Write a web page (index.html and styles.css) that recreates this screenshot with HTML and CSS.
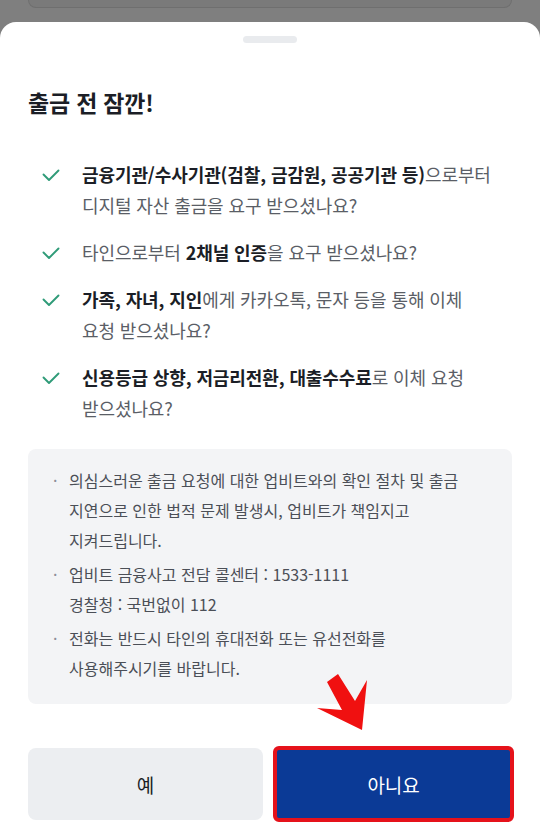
FILE: index.html
```html
<!DOCTYPE html>
<html lang="ko">
<head>
<meta charset="utf-8">
<title>출금 전 잠깐!</title>
<link rel="stylesheet" href="styles.css">
</head>
<body>
  <div class="dim-page">
    <div class="dim-card"></div>
  </div>

  <section class="sheet">
    <div class="handle"></div>
    <h1 class="title">출금 전 잠깐!</h1>

    <ul class="checks">
      <li class="check-item">
        <svg class="check-icon" viewBox="0 0 18 13"><path d="M1.5 5.5 L7 11 L16.5 1.5"/></svg>
        <p><b>금융기관/수사기관(검찰, 금감원, 공공기관 등)</b>으로부터<br>디지털 자산 출금을 요구 받으셨나요?</p>
      </li>
      <li class="check-item">
        <svg class="check-icon" viewBox="0 0 18 13"><path d="M1.5 5.5 L7 11 L16.5 1.5"/></svg>
        <p>타인으로부터 <b>2채널 인증</b>을 요구 받으셨나요?</p>
      </li>
      <li class="check-item">
        <svg class="check-icon" viewBox="0 0 18 13"><path d="M1.5 5.5 L7 11 L16.5 1.5"/></svg>
        <p><b>가족, 자녀, 지인</b>에게 카카오톡, 문자 등을 통해 이체<br>요청 받으셨나요?</p>
      </li>
      <li class="check-item">
        <svg class="check-icon" viewBox="0 0 18 13"><path d="M1.5 5.5 L7 11 L16.5 1.5"/></svg>
        <p><b>신용등급 상향, 저금리전환, 대출수수료</b>로 이체 요청<br>받으셨나요?</p>
      </li>
    </ul>

    <div class="notice">
      <ul class="notice-list">
        <li>의심스러운 출금 요청에 대한 업비트와의 확인 절차 및 출금<br>지연으로 인한 법적 문제 발생시, 업비트가 책임지고<br>지켜드립니다.</li>
        <li>업비트 금융사고 전담 콜센터 : 1533-1111<br>경찰청 : 국번없이 112</li>
        <li>전화는 반드시 타인의 휴대전화 또는 유선전화를<br>사용해주시기를 바랍니다.</li>
      </ul>
    </div>

    <div class="actions">
      <svg class="pointer" viewBox="0 0 50 56">
        <polygon points="10,8 21,0 38,27 50,6 45,56 0,34 25,36"/>
      </svg>
      <button class="btn btn-yes" type="button">예</button>
      <button class="btn btn-no" type="button">아니요</button>
    </div>
  </section>
</body>
</html>
```

FILE: styles.css
```css
* {
  box-sizing: border-box;
}

html, body {
  margin: 0;
  padding: 0;
}

body {
  width: 540px;
  height: 835px;
  overflow: hidden;
  background: #7f7f7f;
  font-family: "Noto Sans CJK KR", "Noto Sans", sans-serif;
  display: flex;
  flex-direction: column;
}

/* dimmed page behind the bottom sheet */
.dim-page {
  height: 22px;
  padding: 0 28px;
  flex: none;
}

.dim-card {
  height: 8px;
  background: #7a7a7a;
  border: 1px solid #6f6f6f;
  border-top: none;
  border-radius: 0 0 8px 8px;
}

/* bottom sheet */
.sheet {
  flex: 1;
  background: #fff;
  border-radius: 16px 16px 0 0;
  padding: 14px 28px 0;
  display: flex;
  flex-direction: column;
}

.handle {
  width: 54px;
  height: 7px;
  border-radius: 4px;
  background: #e9ebee;
  margin: 0 auto;
}

.title {
  margin: 43px 0 0;
  font-size: 23px;
  line-height: 32px;
  font-weight: 700;
  color: #1b1e26;
  letter-spacing: -0.2px;
}

.checks {
  list-style: none;
  margin: 41px 0 0;
  padding: 0;
  display: flex;
  flex-direction: column;
  gap: 16px;
}

.check-item {
  display: flex;
  align-items: flex-start;
}

.check-icon {
  flex: none;
  width: 18px;
  height: 13px;
  margin: 10px 0 0 14px;
  fill: none;
  stroke: #2f9b78;
  stroke-width: 1.9;
  stroke-linecap: round;
  stroke-linejoin: round;
}

.check-item p {
  margin: 0 0 0 22px;
  font-size: 18px;
  line-height: 31px;
  color: #5a5e66;
  letter-spacing: -0.1px;
}

.check-item b {
  font-weight: 700;
  color: #1b1e26;
}

/* grey notice box */
.notice {
  margin-top: 25px;
  background: #f3f4f6;
  border-radius: 8px;
  padding: 16px 16px 21px 20px;
}

.notice-list {
  list-style: none;
  margin: 0;
  padding: 0;
  display: flex;
  flex-direction: column;
  gap: 4px;
}

.notice-list li {
  position: relative;
  padding-left: 21px;
  font-size: 16px;
  line-height: 30px;
  color: #4b4f57;
  white-space: nowrap;
}

.notice-list li::before {
  content: "·";
  position: absolute;
  left: 5px;
  top: 0;
  color: #8a8e96;
}

.actions {
  position: relative;
  margin-top: 44px;
  display: flex;
  gap: 12px;
}

/* red arrow pointing at the "아니요" button */
.pointer {
  position: absolute;
  left: 289px;
  top: -74px;
  width: 50px;
  height: 56px;
  fill: #f01010;
  z-index: 2;
}

.btn {
  flex: 1;
  height: 72px;
  border: none;
  border-radius: 8px;
  font-family: inherit;
  font-size: 19px;
  letter-spacing: -0.2px;
}

.btn-yes {
  background: #eceef1;
  color: #1b1e26;
}

.btn-no {
  background: #0b3a96;
  color: #fff;
  border-radius: 4px;
  border: 1px solid #4a1d3a;
  outline: 4px solid #e5121b;
  outline-offset: -2px;
}
```
